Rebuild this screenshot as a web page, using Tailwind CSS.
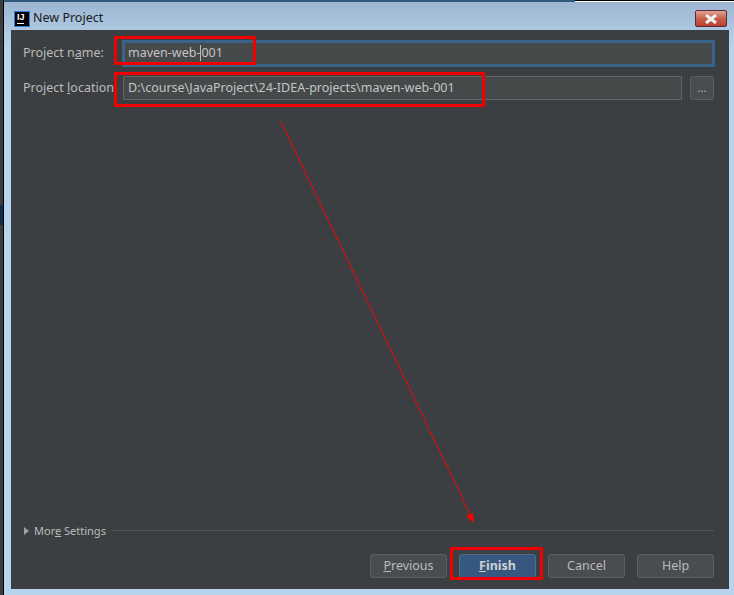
<!DOCTYPE html>
<html lang="en">
<head>
    <meta charset="UTF-8">
    <title>New Project</title>
    <script src="https://cdn.jsdelivr.net/npm/@tailwindcss/browser@4"></script>
</head>
<body class="overflow-hidden bg-[#b8d3ec]">
    <div class="relative flex h-[595px] w-[734px] font-['Noto_Sans','Open_Sans',sans-serif] text-[12.5px] text-[#bbbbbb]">
        <!-- desktop strip behind the dialog -->
        <div class="flex h-full w-[4px] shrink-0 flex-col border-r border-black bg-[#3a3d3f]">
            <div class="mt-[205px] h-[20px] bg-[#0d2c4a]"></div>
        </div>

        <!-- dialog -->
        <div class="flex h-full grow flex-col bg-gradient-to-b from-[#9bb4d0] from-0% to-[#b8d3ec] to-[8%] pl-[7px] pr-[5px] pb-[6px]">
            <div class="-ml-[7px] -mr-[5px] flex h-[2px] shrink-0">
                <div class="w-[571px] bg-[#2f5a80]"></div>
                <div class="grow border-t border-black bg-white"></div>
            </div>
            <div class="-ml-[7px] flex h-[28px] shrink-0 items-center pt-[5px] pl-[10px] pr-[2px]">
                <div class="flex h-[16px] w-[16px] flex-col border border-[#2f7fe0] bg-black px-[2px] pt-px">
                    <span class="font-['Liberation_Sans',sans-serif] text-[9px] leading-[9px] font-bold text-white">IJ</span>
                    <span class="mt-px h-px w-[7px] bg-white"></span>
                </div>
                <span class="ml-[3px] text-[12.5px] text-[#1a1a1a]">New Project</span>
                <div class="ml-auto flex h-[17px] w-[32px] items-center justify-center rounded-[2px] border border-[#5a2a38] bg-gradient-to-b from-[#e0a294] via-[#c8604c] to-[#b8402f]">
                    <svg width="14" height="10" viewBox="0 0 14 10"><path d="M2 1l10 8M12 1L2 9" stroke="#f2f2f2" stroke-width="3"/></svg>
                </div>
            </div>

            <div class="flex grow flex-col bg-[#3c3f41] pl-[12px] pr-[15px]">
                <div class="mt-[10px] flex h-[26px] items-center">
                    <label class="w-[99px] shrink-0">Project n<span class="underline">a</span>me:</label>
                    <div class="-mr-px flex h-[27px] grow items-center border-[3px] border-[#3a638a] bg-[#45494a] pl-[3px]">
                        <span class="text-[#c4c4c4]">maven-web-</span><span class="h-[16px] w-px bg-[#bbbbbb]"></span><span class="text-[#c4c4c4]">001</span>
                    </div>
                </div>
                <div class="mt-[10px] flex h-[24px] items-center">
                    <label class="w-[100px] shrink-0 overflow-hidden whitespace-nowrap">Project <span class="underline">l</span>ocation:</label>
                    <div class="flex h-full w-[559px] items-center border border-[#646464] bg-[#45494a] pl-[4px] text-[#c4c4c4]">D:\course\JavaProject\24-IDEA-projects\maven-web-001</div>
                    <div class="ml-[8px] flex h-full w-[24px] items-center justify-center rounded-[3px] border border-[#5e6060] bg-[#4a4d4f] text-[11px]">...</div>
                </div>

                <div class="mt-auto flex h-[16px] items-center">
                    <svg width="5" height="8" viewBox="0 0 5 8" class="ml-px shrink-0"><path d="M0 0l5 4-5 4z" fill="#a0a0a0"/></svg>
                    <span class="ml-[5px] shrink-0 text-[11px]">Mor<span class="underline">e</span> Settings</span>
                    <div class="mb-[2px] ml-[6px] h-px grow bg-[#555555]"></div>
                </div>
                <div class="mt-[15px] mb-[11px] flex justify-end gap-[12px]">
                    <div class="flex h-[24px] w-[77px] items-center justify-center rounded-[3px] border border-[#5e6060] bg-[#4a4d4f] pt-px"><span><span class="underline">P</span>revious</span></div>
                    <div class="flex h-[24px] w-[77px] items-center justify-center rounded-[3px] border border-[#4c708c] bg-[#365880] pt-px font-bold text-[#d0d0d0]"><span><span class="underline">F</span>inish</span></div>
                    <div class="flex h-[24px] w-[77px] items-center justify-center rounded-[3px] border border-[#5e6060] bg-[#4a4d4f] pt-px">Cancel</div>
                    <div class="flex h-[24px] w-[77px] items-center justify-center rounded-[3px] border border-[#5e6060] bg-[#4a4d4f] pt-px">Help</div>
                </div>
            </div>
        </div>

        <!-- red annotations drawn over the screenshot -->
        <div class="absolute left-[114px] top-[36px] h-[29px] w-[142px] border-[3px] border-[#f00000]"></div>
        <div class="absolute left-[114px] top-[72px] h-[35px] w-[371px] border-[3px] border-[#f00000]"></div>
        <div class="absolute left-[450px] top-[547px] h-[33px] w-[93px] border-[3px] border-[#f00000]"></div>
        <svg class="absolute left-0 top-0" width="734" height="595" viewBox="0 0 734 595">
            <path d="M281 122L470 514" stroke="#ff0000" stroke-width="1.2" stroke-dasharray="3 1" fill="none"/>
            <path d="M474 523L466 516L473 513z" fill="#ff0000"/>
        </svg>
    </div>
</body>
</html>
